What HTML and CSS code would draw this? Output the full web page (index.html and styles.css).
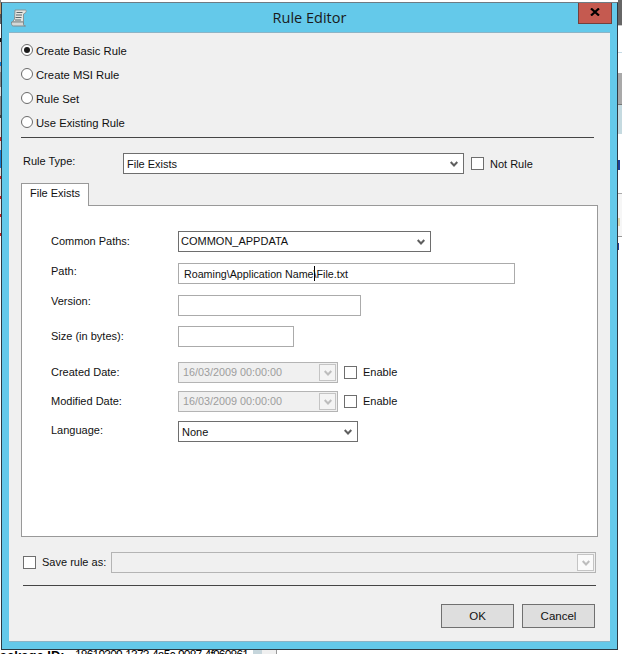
FILE: index.html
```html
<!DOCTYPE html>
<html lang="en">
<head>
<meta charset="utf-8">
<title>Rule Editor</title>
<link rel="stylesheet" href="styles.css">
</head>
<body>
<div class="window">
  <header class="titlebar">
    <svg class="app-icon" width="16" height="18" viewBox="0 0 16 18" aria-hidden="true">
      <path d="M4 1h10.500c.8 0 1 1.600.2 2.600L12.500 5v8H1.500L3.500 10z" fill="#e6e6e2" stroke="#8a9496"/>
      <path d="M.5 13h12v2.500c0 .8.6 1.500 2 1.500H2.500C1.200 17 .5 16 .5 14.500z" fill="#d4d8d7" stroke="#7f8a8c"/>
      <path d="M5.500 3.500h6M5 6h6M4.500 8.500h6M4 11h6" stroke="#59686c" fill="none"/>
    </svg>
    <h1 class="title">Rule Editor</h1>
    <button class="close" type="button" aria-label="Close">
      <svg width="10" height="8" viewBox="0 0 10 8" aria-hidden="true"><path d="M1 .5l8 7M9 .5l-8 7" stroke="#000" stroke-width="2.200" fill="none"/></svg>
    </button>
  </header>
  <main class="client">
    <div class="radios">
      <div class="radio-row"><span class="radio radio--on"></span><span>Create Basic Rule</span></div>
      <div class="radio-row"><span class="radio"></span><span>Create MSI Rule</span></div>
      <div class="radio-row"><span class="radio"></span><span>Rule Set</span></div>
      <div class="radio-row"><span class="radio"></span><span>Use Existing Rule</span></div>
    </div>
    <hr class="sep sep--top">
    <div class="type-row">
      <span class="type-label">Rule Type:</span>
      <div class="field combo combo--type">
        <span class="value">File Exists</span>
        <svg class="chev" width="8" height="6" viewBox="0 0 8 6" aria-hidden="true"><path d="M.7 1l3.300 3.500L7.300 1" fill="none" stroke="#5f5f5f" stroke-width="2"/></svg>
      </div>
      <span class="check check--type"></span>
      <span>Not Rule</span>
    </div>
    <div class="tab">File Exists</div>
    <section class="panel">
      <div class="row row--first">
        <span class="label">Common Paths:</span>
        <div class="field combo combo--paths">
          <span class="value value--tight">COMMON_APPDATA</span>
          <svg class="chev" width="8" height="6" viewBox="0 0 8 6" aria-hidden="true"><path d="M.7 1l3.300 3.500L7.300 1" fill="none" stroke="#5f5f5f" stroke-width="2"/></svg>
        </div>
      </div>
      <div class="row row--m11">
        <span class="label lift-2">Path:</span>
        <div class="field text text--path"><span>Roaming\Application Name</span><span class="caret"></span><span>\File.txt</span></div>
      </div>
      <div class="row row--m11">
        <span class="label lift-4">Version:</span>
        <div class="field text text--version"></div>
      </div>
      <div class="row row--m10">
        <span class="label">Size (in bytes):</span>
        <div class="field text text--size"></div>
      </div>
      <div class="row row--m15">
        <span class="label">Created Date:</span>
        <div class="field date">
          <span class="value value--disabled">16/03/2009 00:00:00</span>
          <span class="drop"><svg width="8" height="6" viewBox="0 0 8 6" aria-hidden="true"><path d="M.7 1l3.300 3.500L7.300 1" fill="none" stroke="#bdbdbd" stroke-width="2"/></svg></span>
        </div>
        <span class="check check--date"></span>
        <span class="enable">Enable</span>
      </div>
      <div class="row row--m8">
        <span class="label">Modified Date:</span>
        <div class="field date">
          <span class="value value--disabled">16/03/2009 00:00:00</span>
          <span class="drop"><svg width="8" height="6" viewBox="0 0 8 6" aria-hidden="true"><path d="M.7 1l3.300 3.500L7.300 1" fill="none" stroke="#bdbdbd" stroke-width="2"/></svg></span>
        </div>
        <span class="check check--date"></span>
        <span class="enable">Enable</span>
      </div>
      <div class="row row--m9">
        <span class="label label--lang">Language:</span>
        <div class="field combo combo--lang">
          <span class="value">None</span>
          <svg class="chev" width="8" height="6" viewBox="0 0 8 6" aria-hidden="true"><path d="M.7 1l3.300 3.500L7.300 1" fill="none" stroke="#5f5f5f" stroke-width="2"/></svg>
        </div>
      </div>
    </section>
    <div class="save-row">
      <span class="check check--save"></span>
      <span class="save-label">Save rule as:</span>
      <div class="field date date--save">
        <span class="drop"><svg width="8" height="6" viewBox="0 0 8 6" aria-hidden="true"><path d="M.7 1l3.300 3.500L7.300 1" fill="none" stroke="#bdbdbd" stroke-width="2"/></svg></span>
      </div>
    </div>
    <hr class="sep sep--bottom">
    <div class="buttons">
      <button class="btn" type="button">OK</button>
      <button class="btn" type="button">Cancel</button>
    </div>
  </main>
</div>
<div class="behind">
  <span class="behind-label">Package ID:</span>
  <span class="behind-value">18619309-1373-4a5c-9087-4f960861</span>
  <span class="behind-cell"></span>
  <span class="behind-cell behind-cell--end"></span>
</div>
</body>
</html>
```
FILE: styles.css
```css
* { box-sizing: border-box; }
html, body {
  margin: 0;
  width: 622px;
  height: 654px;
  overflow: hidden;
}
body {
  font: 11px/14px "Liberation Sans", Arial, sans-serif;
  color: #111;
  background-color: #fff;
  background-repeat: no-repeat;
  background-image:
    linear-gradient(#1d3f9a, #1d3f9a),
    linear-gradient(#1d3f9a, #1d3f9a),
    linear-gradient(#e4d9b0, #e4d9b0),
    linear-gradient(to bottom,
      #666 0 25px, #c8c8c8 25px 26px, #fff 26px 52px, #c6dbe6 52px 53px, #fff 53px 73px,
      #a9a9a9 73px 104px, #777 104px 105px, #c5dae0 105px 134px, #fff 134px 193px,
      #aaa 193px 194px, #f6f6f6 194px 236px, #999 236px 237px, #fff 237px),
    linear-gradient(to bottom,
      #888 0 3px, #c96 3px 14px, #555 14px 18px, #666 18px 24px, #fff 24px 38px, #111 38px 42px,
      #ccc 42px 62px, #0f7fd8 62px 66px, #bbb 66px 72px, #888 72px 87px, #ddd 87px 96px,
      #888 96px 115px, #444 115px 118px, #ddd 118px 137px, #c22 137px 141px, #ddd 141px 150px,
      #0f7fd8 150px 168px, #ddd 168px 176px, #c22 176px 179px, #ddd 179px 196px, #c22 196px 199px,
      #eee 199px 214px, #c22 214px 217px, #eee 217px 233px, #c22 233px 236px, #fff 236px);
  background-size: 2px 10px, 1px 7px, 2px 8px, 4px 300px, 1px 300px;
  background-position: 618px 160px, 618px 243px, 618px 218px, 618px 0, 0 0;
}
.window {
  width: 617px;
  height: 648px;
  margin: 2px 0 0 1px;
  border: 1px solid #2c3a44;
  border-top-color: #6e7b83;
  background: #64c9ea;
}
.titlebar {
  height: 29px;
  display: grid;
  grid-template-columns: 1fr auto 1fr;
}
.app-icon { margin: 6px 0 0 9px; }
.title {
  margin: 0;
  font: 400 14.500px/29px "Open Sans", sans-serif;
  color: #1a1a1a;
}
.close {
  justify-self: end;
  width: 34px;
  height: 21px;
  margin: 0 5px 0 0;
  padding: 0 0 3px;
  display: flex;
  align-items: center;
  justify-content: center;
  background: #c55a50;
  border: 1px solid #73403c;
  border-top: 0;
}
.client {
  width: 601px;
  height: 610px;
  margin: 0 7px;
  background: #f0f0f0;
  border-top: 1px solid #8db4c6;
  border-bottom: 1px solid #8db4c6;
  padding-top: 5px;
}
.radios { margin-left: 12px; font-size: 11.250px; }
.radio-row {
  height: 24px;
  display: flex;
  align-items: center;
  gap: 3px;
}
.radio-row span:last-child { padding-top: 1px; }
.radio {
  width: 12px;
  height: 12px;
  border: 1px solid #6a6a6a;
  border-radius: 50%;
  background: #fff;
  display: flex;
  align-items: center;
  justify-content: center;
}
.radio--on::after {
  content: "";
  width: 6px;
  height: 6px;
  border-radius: 50%;
  background: #1a1a1a;
}
.sep {
  height: 1px;
  margin: 0;
  border: 0;
  background: #454545;
}
.sep--top { width: 573px; margin: 3px 0 0 12px; }
.sep--bottom { width: 573px; margin: 12px 0 0 14px; }
.type-row {
  height: 21px;
  margin: 15px 0 0 14px;
  display: flex;
  align-items: center;
}
.type-label { width: 100px; padding-bottom: 5px; }
.field {
  height: 21px;
  flex: none;
  background: #fff;
  display: flex;
  align-items: center;
}
.combo { border: 1px solid #6e6e6e; justify-content: space-between; padding-right: 5px; }
.combo--type { width: 341px; }
.combo--paths { width: 253px; }
.combo--lang { width: 180px; }
.value { padding-left: 3px; }
.value--tight { padding: 0 0 2px 2px; }
.value--disabled { padding: 0 0 2px 4px; color: #9d9d9d; font-size: 10.800px; }
.check {
  width: 13px;
  height: 13px;
  flex: none;
  background: #fff;
  border: 1px solid #6e6e6e;
}
.check--type { margin: 0 6px 0 7px; }
.check--date { margin: 0 6px; }
.check--save { margin-right: 6px; }
.tab {
  width: 68px;
  height: 23px;
  margin: 9px 0 -1px 12px;
  position: relative;
  background: #fff;
  border: 1px solid #999;
  border-bottom: 0;
  padding: 2px 0 0 8px;
}
.panel {
  width: 577px;
  height: 332px;
  margin-left: 12px;
  background: #fff;
  border: 1px solid #999;
  padding: 25px 0 0 29px;
}
.row {
  height: 21px;
  display: flex;
  align-items: center;
}
.row--m8 { margin-top: 8px; }
.row--m9 { margin-top: 9px; }
.row--m10 { margin-top: 10px; }
.row--m11 { margin-top: 11px; }
.row--m15 { margin-top: 15px; }
.label { width: 127px; flex: none; padding-bottom: 2px; }
.label--lang { padding-bottom: 4px; }
.lift-2 { padding-bottom: 6px; }
.lift-4 { padding-bottom: 10px; }
.enable { padding-bottom: 2px; }
.text { border: 1px solid #ababab; }
.text--path { width: 337px; padding-left: 5px; font-size: 10.700px; }
.text--version { width: 183px; }
.text--size { width: 116px; }
.caret {
  width: 1px;
  height: 15px;
  margin-right: -1px;
  background: #000;
}
.date {
  width: 160px;
  background: #f0f0f0;
  border: 1px solid #b4b4b4;
  justify-content: space-between;
  padding-right: 1px;
}
.drop {
  width: 17px;
  height: 17px;
  border: 1px solid #c4c4c4;
  background: #f4f4f4;
  display: flex;
  align-items: center;
  justify-content: center;
}
.save-row {
  height: 21px;
  margin: 15px 0 0 14px;
  display: flex;
  align-items: center;
}
.save-label { width: 69px; white-space: nowrap; padding-bottom: 2px; }
.date--save { width: 485px; justify-content: flex-end; }
.date--save .drop { background: #fafafa; }
.buttons {
  margin-top: 18px;
  padding-right: 15px;
  display: flex;
  justify-content: flex-end;
  gap: 8px;
}
.btn {
  width: 73px;
  height: 24px;
  padding: 0;
  font: inherit;
  font-size: 11.500px;
  color: #111;
  background: #dedede;
  border: 1px solid #707070;
}
.behind {
  height: 4px;
  display: flex;
  overflow: hidden;
  color: #000;
}
.behind-label {
  width: 84px;
  flex: none;
  margin-left: -9px;
  overflow: hidden;
  font: 700 13px/11px "Liberation Sans", sans-serif;
  white-space: nowrap;
}
.behind-value {
  width: 178px;
  flex: none;
  overflow: hidden;
  white-space: nowrap;
  font: 12px/10px "Liberation Sans", sans-serif;
  letter-spacing: -.8px;
}
.behind-cell { width: 9px; flex: none; background: #c6d6dc; }
.behind-cell--end { width: 15px; background: #f0f0f0; border-right: 1px solid #999; }
```
